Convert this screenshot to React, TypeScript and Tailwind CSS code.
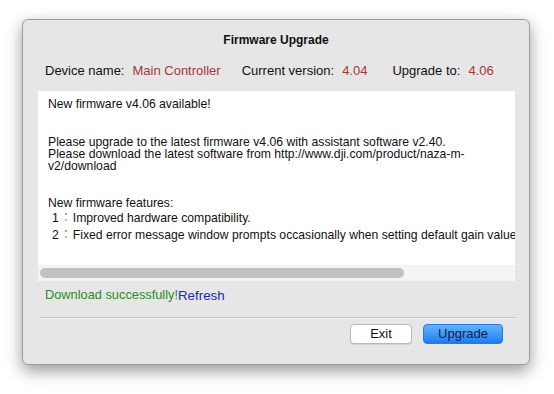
const font = { fontFamily: '"Liberation Sans", Arial, "Noto Sans CJK JP", sans-serif' };

function InfoItem({ label, value, gapLeft }: { label: string; value: string; gapLeft: string }) {
  return (
    <div className={`flex items-baseline ${gapLeft}`}>
      <span className="text-[#111]">{label}</span>
      <span className="ml-[8px] text-[#9e3a3a]">{value}</span>
    </div>
  );
}

function Feature({ n, text, className = '' }: { n: number; text: string; className?: string }) {
  return (
    <div className={`flex pl-[4px] ${className}`}>
      <span className="shrink-0">{n}</span>
      <span className="w-[14px] shrink-0 text-center text-[#888]">：</span>
      <span className="shrink-0">{text}</span>
    </div>
  );
}

export default function App() {
  return (
    <div className="w-[554px] h-[394px] bg-white pl-[22px] pt-[19px]" style={font}>
      <div className="flex h-[346px] w-[508px] flex-col rounded-[6px] border border-[#9c9c9c] bg-[#e6e6e6] shadow-[0_6px_16px_rgba(0,0,0,0.4)]">
        <div className="pt-[13px] text-center text-[12px] font-bold leading-[14px] text-[#111]">
          Firmware Upgrade
        </div>

        <div className="mt-[16px] flex pl-[22px] text-[13px] leading-[15px]">
          <InfoItem label="Device name:" value="Main Controller" gapLeft="" />
          <InfoItem label="Current version:" value="4.04" gapLeft="ml-[21px]" />
          <InfoItem label="Upgrade to:" value="4.06" gapLeft="ml-[25px]" />
        </div>

        {/* release notes, scrolls sideways */}
        <div className="ml-[15px] mr-[14px] mt-[13px] flex h-[190px] flex-col bg-white">
          <div className="flex-1 overflow-hidden whitespace-nowrap pl-[10px] pt-[7px] text-[12.2px] leading-[12px] text-[#111]">
            <div>New firmware v4.06 available!</div>
            <div className="mt-[26px]">
              Please upgrade to the latest firmware v4.06 with assistant software v2.40.
            </div>
            <div>Please download the latest software from http://www.dji.com/product/naza-m-</div>
            <div>v2/download</div>
            <div className="mt-[25px]">New firmware features:</div>
            <Feature n={1} text="Improved hardware compatibility." className="mt-[3px]" />
            <Feature
              n={2}
              text="Fixed error message window prompts occasionally when setting default gain value"
              className="mt-[5px]"
            />
          </div>
          <div className="flex h-[16px] items-center bg-[#f4f4f4] px-[2px]">
            <div className="h-[10px] w-[364px] rounded-full bg-[#c2c2c2]" />
          </div>
        </div>

        <div className="mt-[6px] flex items-baseline pl-[22px] leading-[16px]">
          <span className="text-[12.8px] text-[#2f8a2a]">Download successfully!</span>
          <span className="relative top-[1px] text-[13.3px] text-[#2323b8]">Refresh</span>
        </div>

        <div className="ml-[17px] mr-[13px] mt-[14px] h-[1px] bg-[#c6c6c6]" />
        <div className="ml-[17px] mr-[13px] h-[1px] bg-[#f0f0f0]" />

        <div className="mt-[5px] flex justify-end gap-[11px] pr-[26px] text-[13px]">
          <button className="h-[20px] w-[62px] rounded-[4px] border border-[#b9b9b9] bg-white leading-[18px] text-[#111] shadow-[0_1px_0_rgba(0,0,0,0.08)]">
            Exit
          </button>
          <button className="h-[20px] w-[80px] rounded-[4px] border border-[#2a78e0] bg-gradient-to-b from-[#62b3fa] to-[#1b7cf0] leading-[18px] text-[#0c1f4d]">
            Upgrade
          </button>
        </div>
      </div>
    </div>
  );
}
